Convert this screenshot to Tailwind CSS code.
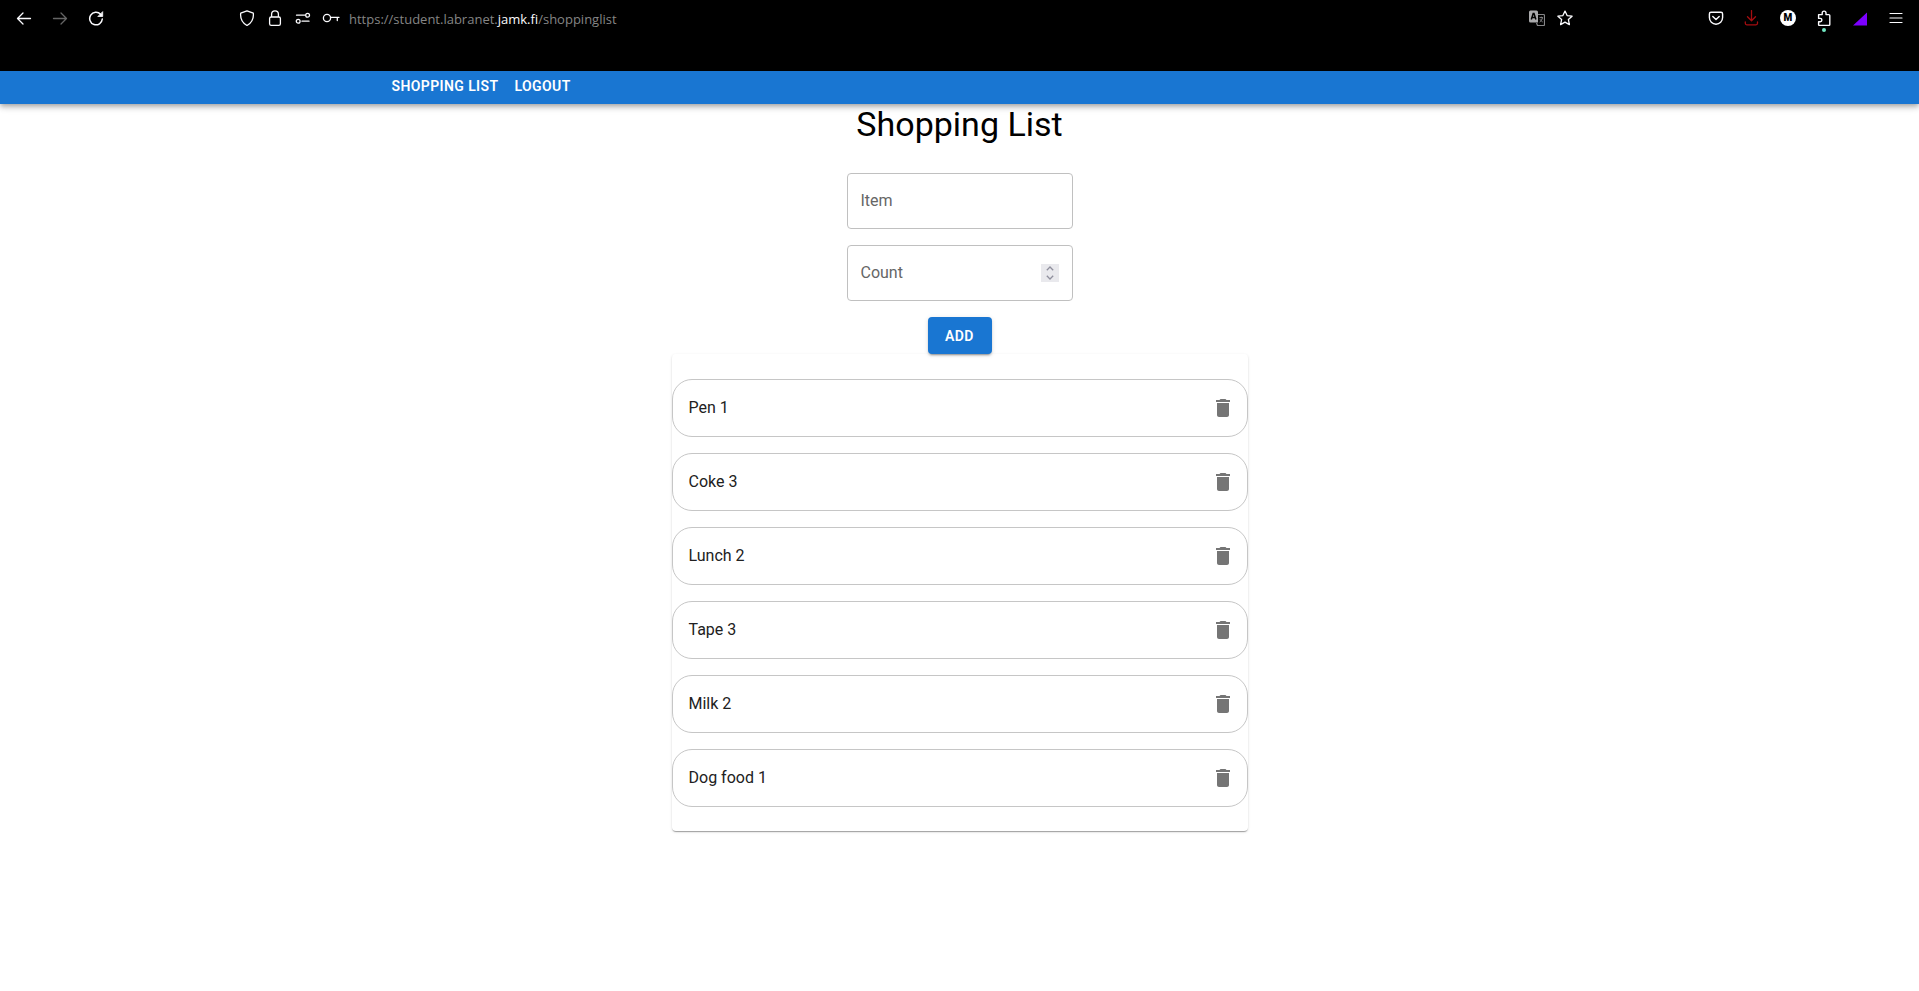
<!DOCTYPE html>
<html lang="en">
<head>
<meta charset="utf-8">
<title>Shopping List</title>
<script src="https://cdn.jsdelivr.net/npm/@tailwindcss/browser@4"></script>
</head>
<body class="min-h-screen bg-white font-['Roboto',sans-serif] text-black">

<div class="flex h-[71px] items-start bg-black px-[6px] pr-[5px] text-[#fbfbfe]">
  <div class="flex w-full items-center">
    <button aria-label="Back" class="flex h-9 w-9 items-center justify-center"><svg width="16" height="16" viewBox="0 0 16 16" fill="none" stroke="currentColor" stroke-width="1.3" stroke-linecap="round" stroke-linejoin="round"><path d="M14.5 8.5H1.5M7 3L1.5 8.5L7 14"/></svg></button>
    <button aria-label="Forward" class="flex h-9 w-9 items-center justify-center text-[#656565]"><svg width="16" height="16" viewBox="0 0 16 16" fill="none" stroke="currentColor" stroke-width="1.3" stroke-linecap="round" stroke-linejoin="round"><path d="M1.5 8.5H14.5M9 3L14.5 8.5L9 14"/></svg></button>
    <button aria-label="Reload" class="flex h-9 w-9 items-center justify-center"><svg width="16" height="16" viewBox="0 0 16 16" fill="none" stroke="currentColor" stroke-width="1.5" stroke-linecap="round"><path d="M12.6 4.2A6.3 6.3 0 1 0 14.3 9"/><path d="M14.7 2V6.5H10.2Z" fill="currentColor" stroke-width="0.8" stroke-linejoin="round"/></svg></button>

    <div class="mx-[119px] flex flex-1 items-center">
      <button aria-label="Tracking protection" class="flex h-9 w-7 items-center justify-center"><svg width="16" height="16" viewBox="0 0 16 16" fill="none" stroke="currentColor" stroke-width="1.3" stroke-linejoin="round"><path d="M8 .8L14.3 3.2Q15.2 11.4 8 15.5Q.8 11.4 1.7 3.2Z"/></svg></button>
      <button aria-label="Connection secure" class="flex h-9 w-7 items-center justify-center"><svg width="16" height="16" viewBox="0 0 16 16" fill="none" stroke="currentColor" stroke-width="1.3"><rect x="2.6" y="7" width="10.8" height="8.3" rx="1.6"/><path d="M4.6 7V4.2A3.4 3.4 0 0 1 11.4 4.2V7"/></svg></button>
      <button aria-label="Permissions" class="flex h-9 w-7 items-center justify-center"><svg width="16" height="16" viewBox="0 0 16 16" fill="none" stroke="currentColor" stroke-width="1.3" stroke-linecap="round"><path d="M1.5 5.2H10M7 11.2H14"/><circle cx="12.6" cy="5.2" r="1.9"/><circle cx="3.2" cy="11.2" r="1.9"/></svg></button>
      <button aria-label="Saved login" class="flex h-9 w-7 items-center justify-center"><svg width="18" height="16" viewBox="0 0 18 16" fill="none" stroke="currentColor" stroke-width="1.3" stroke-linecap="round"><circle cx="5" cy="8" r="3.6"/><path d="M8.6 7.3H17M15.3 7.3V10.5"/></svg></button>
      <div class="flex-1 pl-1 pt-px font-['Open_Sans',sans-serif] text-[13px] leading-5 text-[#858585]">https://student.labranet.<span class="text-[#fbfbfe]">jamk.fi</span>/shoppinglist</div>
      <button aria-label="Translate page" class="flex h-9 w-7 items-center justify-center"><svg width="16" height="16" viewBox="0 0 16 16"><path d="M1.500.5H7.500Q9 .5 9 2V12.500H1.500Q0 12.500 0 11V2Q0 .5 1.500.5Z" fill="#a9a9ab"/><path d="M2.300 9.500L4.200 3.500H5L6.900 9.500M3 7.500H6.200" fill="none" stroke="#000" stroke-width="1.500"/><path d="M9 4.500H14.500Q15.500 4.500 15.500 5.500V14.500Q15.500 15.500 14.500 15.500H8.500L7.500 13" fill="none" stroke="#858587" stroke-width="1.200"/><path d="M10.500 7.600H14M12.300 6.700V7.600M13.500 7.800Q13 10.500 10.700 12M11 9.300Q12 11 13.700 12" fill="none" stroke="#858587" stroke-width="1"/></svg></button>
      <button aria-label="Bookmark this page" class="flex h-9 w-7 items-center justify-center"><svg width="16" height="16" viewBox="0 0 16 16" fill="none" stroke="currentColor" stroke-width="1.3" stroke-linejoin="round"><path d="M8 1.1L10.1 5.6L15.1 6.2L11.4 9.6L12.4 14.6L8 12.1L3.6 14.6L4.6 9.6L.9 6.2L5.9 5.6Z"/></svg></button>
    </div>

    <button aria-label="Save to Pocket" class="flex h-9 w-9 items-center justify-center"><svg width="16" height="16" viewBox="0 0 16 16" fill="none" stroke="currentColor" stroke-width="1.4" stroke-linecap="round" stroke-linejoin="round"><path d="M3 2.3H13Q14.6 2.3 14.6 4V7.6A6.6 6.6 0 0 1 1.4 7.6V4Q1.4 2.3 3 2.3Z"/><path d="M4.8 6.4L8 9.5L11.2 6.4"/></svg></button>
    <button aria-label="Downloads" class="flex h-9 w-9 items-center justify-center text-[#a50d10]"><svg width="16" height="16" viewBox="0 0 16 16" fill="none" stroke="currentColor" stroke-width="1.3" stroke-linecap="round" stroke-linejoin="round"><path d="M7.500 .6V10.500M3.500 6.800L7.500 10.800L11.500 6.800M1.300 12V13.300Q1.300 14.800 2.800 14.800H12Q13.500 14.800 13.500 13.300V12"/></svg></button>
    <button aria-label="Account" class="flex h-9 w-9 items-center justify-center"><span class="flex h-4 w-4 items-center justify-center rounded-full bg-white text-[10px] font-black leading-none text-black">M</span></button>
    <button aria-label="Extensions" class="relative flex h-9 w-9 items-center justify-center"><svg width="16" height="16" viewBox="0 0 16 16" fill="none" stroke="currentColor" stroke-width="1.4" stroke-linejoin="round"><path d="M2.600 4.600H6.200V3A1.900 1.900 0 0 1 10 3V4.600H12.800Q13.800 4.600 13.800 5.600V14.400Q13.800 15.400 12.800 15.400H3.600Q2.600 15.400 2.600 14.400V11.800H4.200A1.700 1.700 0 0 0 4.200 8.400H2.600Z"/></svg><span class="absolute bottom-1 left-4 h-1 w-1 rounded-full bg-[#72e8c3]"></span></button>
    <button aria-label="Theme extension" class="flex h-9 w-9 items-center justify-center"><svg width="14" height="16" viewBox="0 0 14 16"><path d="M14 2.500V15.500H0Z" fill="#7c00ff"/></svg></button>
    <button aria-label="Open application menu" class="flex h-9 w-9 items-center justify-center"><svg width="14" height="16" viewBox="0 0 14 16" fill="none" stroke="currentColor" stroke-width="1.2" stroke-linecap="round"><path d="M1 3.500H13M1 8H13M1 12.500H13"/></svg></button>
  </div>
</div>

<header class="relative bg-[#1976d2] shadow-[0_2px_4px_-1px_rgba(0,0,0,0.2),0_4px_5px_0_rgba(0,0,0,0.14),0_1px_10px_0_rgba(0,0,0,0.12)]">
  <nav class="mx-auto flex max-w-[1200px] gap-4 px-8 pt-[5px] pb-2 text-sm font-semibold tracking-[0.4px] text-white">
    <a href="#shoppinglist">SHOPPING LIST</a>
    <a href="#logout">LOGOUT</a>
  </nav>
</header>

<main class="mx-auto flex max-w-[576px] flex-col items-center">
  <h1 class="text-[34px] leading-10">Shopping List</h1>
  <form class="flex w-[226px] flex-col items-center gap-4 pt-[29px]">
    <div class="grid w-full items-center rounded border border-[#c0c0c0]">
      <label for="item" class="pointer-events-none col-start-1 row-start-1 px-[13px] pb-px text-base text-[#666666]">Item</label>
      <input id="item" type="text" class="col-start-1 row-start-1 h-[54px] w-full rounded px-[13px] text-base">
    </div>
    <div class="grid w-full items-center rounded border border-[#c0c0c0]">
      <label for="count" class="pointer-events-none col-start-1 row-start-1 px-[13px] text-base text-[#666666]">Count</label>
      <input id="count" type="number" class="col-start-1 row-start-1 h-[54px] w-full appearance-none rounded px-[13px] text-base [appearance:textfield]">
      <div class="z-10 col-start-1 row-start-1 mr-[13px] flex h-[18px] w-[18px] flex-col justify-self-end bg-[#e9e9ed]">
        <button type="button" aria-label="Increase count" class="flex flex-1 items-center justify-center"><svg width="8" height="5" viewBox="0 0 8 5" fill="none" stroke="#8f8f9d" stroke-width="1.3"><path d="M.8 4.2L4 1L7.2 4.2"/></svg></button>
        <button type="button" aria-label="Decrease count" class="flex flex-1 items-center justify-center"><svg width="8" height="5" viewBox="0 0 8 5" fill="none" stroke="#8f8f9d" stroke-width="1.3"><path d="M.8 .8L4 4L7.2 .8"/></svg></button>
      </div>
    </div>
    <button type="button" class="relative h-[37px] min-w-16 rounded bg-[#1976d2] px-4 text-sm font-semibold tracking-[0.4px] text-white shadow-[0_3px_1px_-2px_rgba(0,0,0,0.2),0_2px_2px_0_rgba(0,0,0,0.14),0_1px_5px_0_rgba(0,0,0,0.12)]">ADD</button>
  </form>

  <ul class="flex w-full flex-col gap-4 rounded pt-[25px] pb-6 shadow-[0_2px_1px_-1px_rgba(0,0,0,0.2),0_1px_1px_0_rgba(0,0,0,0.14),0_1px_3px_0_rgba(0,0,0,0.12)]">
    <li class="flex h-[58px] items-center justify-between rounded-[20px] border border-[#c6c6c6] px-4 text-base text-[#212121]"><span>Pen 1</span><button aria-label="Delete Pen" class="-mr-1 text-[#757575]"><svg width="24" height="24" viewBox="0 0 24 24" fill="currentColor"><path d="M6 19c0 1.1.9 2 2 2h8c1.1 0 2-.9 2-2V7H6v12zM19 4h-3.500l-1-1h-5l-1 1H5v2h14V4z"/></svg></button></li>
    <li class="flex h-[58px] items-center justify-between rounded-[20px] border border-[#c6c6c6] px-4 text-base text-[#212121]"><span>Coke 3</span><button aria-label="Delete Coke" class="-mr-1 text-[#757575]"><svg width="24" height="24" viewBox="0 0 24 24" fill="currentColor"><path d="M6 19c0 1.1.9 2 2 2h8c1.1 0 2-.9 2-2V7H6v12zM19 4h-3.500l-1-1h-5l-1 1H5v2h14V4z"/></svg></button></li>
    <li class="flex h-[58px] items-center justify-between rounded-[20px] border border-[#c6c6c6] px-4 text-base text-[#212121]"><span>Lunch 2</span><button aria-label="Delete Lunch" class="-mr-1 text-[#757575]"><svg width="24" height="24" viewBox="0 0 24 24" fill="currentColor"><path d="M6 19c0 1.1.9 2 2 2h8c1.1 0 2-.9 2-2V7H6v12zM19 4h-3.500l-1-1h-5l-1 1H5v2h14V4z"/></svg></button></li>
    <li class="flex h-[58px] items-center justify-between rounded-[20px] border border-[#c6c6c6] px-4 text-base text-[#212121]"><span>Tape 3</span><button aria-label="Delete Tape" class="-mr-1 text-[#757575]"><svg width="24" height="24" viewBox="0 0 24 24" fill="currentColor"><path d="M6 19c0 1.1.9 2 2 2h8c1.1 0 2-.9 2-2V7H6v12zM19 4h-3.500l-1-1h-5l-1 1H5v2h14V4z"/></svg></button></li>
    <li class="flex h-[58px] items-center justify-between rounded-[20px] border border-[#c6c6c6] px-4 text-base text-[#212121]"><span>Milk 2</span><button aria-label="Delete Milk" class="-mr-1 text-[#757575]"><svg width="24" height="24" viewBox="0 0 24 24" fill="currentColor"><path d="M6 19c0 1.1.9 2 2 2h8c1.1 0 2-.9 2-2V7H6v12zM19 4h-3.500l-1-1h-5l-1 1H5v2h14V4z"/></svg></button></li>
    <li class="flex h-[58px] items-center justify-between rounded-[20px] border border-[#c6c6c6] px-4 text-base text-[#212121]"><span>Dog food 1</span><button aria-label="Delete Dog food" class="-mr-1 text-[#757575]"><svg width="24" height="24" viewBox="0 0 24 24" fill="currentColor"><path d="M6 19c0 1.1.9 2 2 2h8c1.1 0 2-.9 2-2V7H6v12zM19 4h-3.500l-1-1h-5l-1 1H5v2h14V4z"/></svg></button></li>
  </ul>
</main>
</body>
</html>
